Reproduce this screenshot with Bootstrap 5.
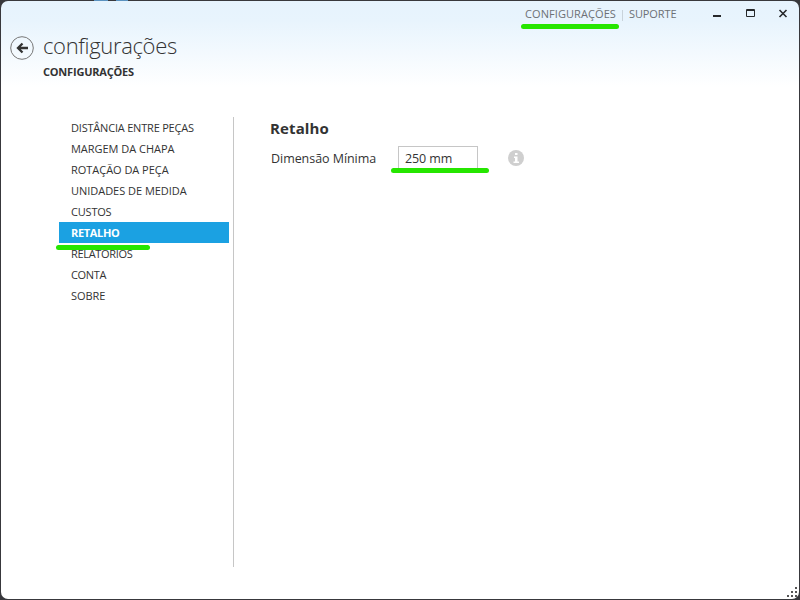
<!DOCTYPE html>
<html lang="pt">
<head>
<meta charset="utf-8">
<meta name="viewport" content="width=device-width, initial-scale=1">
<title>Configurações</title>
<link href="https://cdn.jsdelivr.net/npm/bootstrap@5.3.0/dist/css/bootstrap.min.css" rel="stylesheet">
<style>
body{font-family:"Open Sans","Noto Sans",sans-serif;color:#333;background:#202022;font-size:11px}
.desktop{width:800px;height:600px;padding:1px;background:linear-gradient(90deg,transparent 94px,#5a92c0 94px 108px,transparent 108px 116px,#5a92c0 116px 128px,transparent 128px) 0 0/800px 1px no-repeat,#38383c}
.app-window{border-radius:7px;background:linear-gradient(#e6f3fd 0,#e8f4fd 20px,#fff 86px)}
.top-menu{left:524px;top:5px;line-height:16px;color:#6d7175}
.top-menu .vr{margin:4px 6px 4px 6px}
.win-buttons{right:10px;top:5px}
.title-row{padding:30px 0 0 9px;height:63px}
.back-btn{width:24px;height:24px;margin-top:5px}
.page-title{font-size:22px;line-height:29px;font-weight:300;margin-left:9px;letter-spacing:-.34px}
.page-sub{font-weight:700;line-height:16px;margin-left:42px;letter-spacing:-.2px}
.main-area{margin-top:37px;height:450px;padding-left:58px}
.side-menu{width:175px;padding:0 4px 0 0;border-right:1px solid #c6c6c6}
.side-menu a{height:21px;line-height:21px;padding-left:12px;color:#333;text-decoration:none;white-space:nowrap;letter-spacing:-.03px}
.side-menu a.tight{letter-spacing:-.2px}
.side-menu a.tighter{letter-spacing:-.32px}
.side-menu a.active{background:#1ba1e2;color:#fff;font-weight:700}
.settings{padding-left:36px}
.settings h2{font-size:15px;font-weight:700;line-height:22px;margin:0 0 7px;letter-spacing:.12px}
.field-label{width:128px;padding:3px 0 0 1px;font-size:12.5px;letter-spacing:-.05px}
.field-box{width:80px;height:24px;border:1px solid #c6c6c6;font-size:12.5px;line-height:23px;padding:0 6px;color:#333;background:#fff;outline:0;border-radius:0;letter-spacing:-.1px}
.marker{height:5px;border-radius:3px;background:#26e600}
.m-top{left:520px;top:23px;width:98px}
.m-side{left:-3px;bottom:-7px;width:94px}
.m-field{left:-7px;top:22px;width:98px}
</style>
<script src="https://cdn.jsdelivr.net/npm/bootstrap@5.3.0/dist/js/bootstrap.bundle.min.js"></script>
</head>
<body>
<div class="desktop overflow-hidden">
<div class="app-window position-relative h-100">
  <nav class="top-menu position-absolute d-flex"><span style="letter-spacing:.08px">CONFIGURAÇÕES</span><span class="vr"></span><span style="letter-spacing:-.1px">SUPORTE</span></nav>
  <span class="marker m-top position-absolute"></span>
  <svg class="win-buttons position-absolute" width="80" height="16" viewBox="0 0 80 16" fill="none" stroke="#26282a"><path d="M4 10h8" stroke-width="2"/><path d="M37.5 3.5h8v7h-8zM37 4.500h9"/><path d="M70.5 4l7 7M77.5 4l-7 7" stroke-width="1.6"/></svg>
  <header class="title-row d-flex">
    <svg class="back-btn" viewBox="0 0 24 24" fill="none"><circle cx="12" cy="12" r="11.3" stroke="#777"/><path d="M18 12H8M12.5 7.5L8 12l4.500 4.500" stroke="#333" stroke-width="2.300"/></svg>
    <h1 class="page-title mb-0">configurações</h1>
  </header>
  <div class="page-sub">CONFIGURAÇÕES</div>
  <main class="main-area d-flex">
    <nav class="side-menu d-flex flex-column">
      <a href="#" class="tight">DISTÂNCIA ENTRE PEÇAS</a><a href="#">MARGEM DA CHAPA</a><a href="#">ROTAÇÃO DA PEÇA</a><a href="#">UNIDADES DE MEDIDA</a><a href="#" class="tight">CUSTOS</a>
      <a href="#" class="active tighter position-relative z-1">RETALHO<span class="marker m-side position-absolute"></span></a>
      <a href="#" class="tighter">RELATÓRIOS</a><a href="#" class="tighter">CONTA</a><a href="#">SOBRE</a>
    </nav>
    <section class="settings">
      <h2>Retalho</h2>
      <div class="d-flex align-items-center">
        <label class="field-label" for="dim">Dimensão Mínima</label>
        <div class="position-relative d-flex"><input id="dim" class="field-box" value="250 mm"><span class="marker m-field position-absolute"></span></div>
        <svg class="ms-4" width="28" height="16" viewBox="-6 0 28 16"><circle cx="8" cy="8" r="8" fill="#cfcfcf"/><path d="M7 3h2.500v2H7zM6 6.500h3.500v5H11V13H5.500v-1.500H7V8H6z" fill="#fff"/></svg>
      </div>
    </section>
  </main>
  <svg class="position-absolute bottom-0 end-0" width="14" height="14" fill="#555"><path d="M10 2h2v2h-2zM6 6h2v2H6zM10 6h2v2h-2zM2 10h2v2H2zM6 10h2v2H6zM10 10h2v2h-2z"/></svg>
</div>
</div>
</body>
</html>
